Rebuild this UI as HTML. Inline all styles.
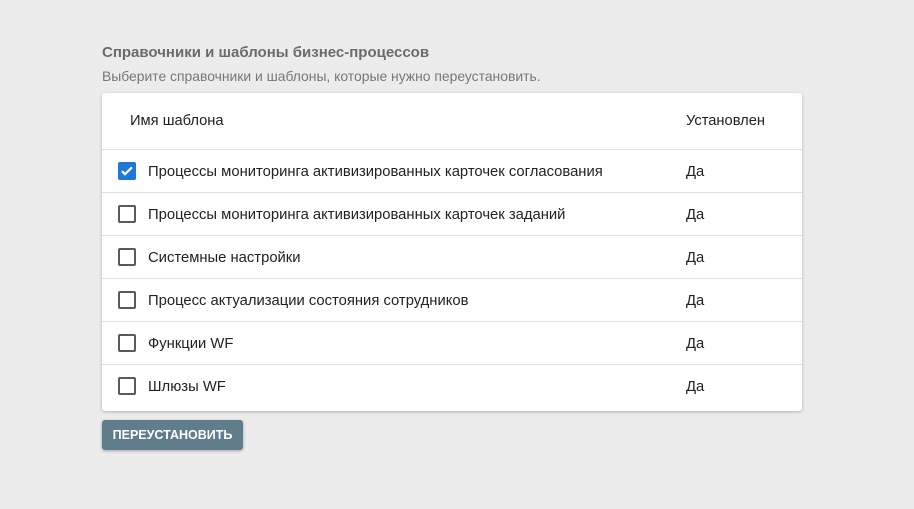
<!DOCTYPE html>
<html><head><meta charset="utf-8"><style>
body{margin:0;background:#ececec;font-family:"Liberation Sans",Arial,sans-serif;width:914px;height:509px;overflow:hidden;position:relative}
.t{position:absolute;left:102px;top:44px;font-size:15px;font-weight:bold;color:#6b6b6b}
.s{position:absolute;left:102px;top:68px;font-size:13.9px;color:#777}
.card{position:absolute;left:102px;top:93px;width:700px;height:318px;background:#fff;border-radius:3px;box-shadow:0 1px 3px rgba(0,0,0,.25)}
.h{height:56px;border-bottom:1px solid #e0e0e0;position:relative;font-size:14.7px;color:#222}
.h span{position:absolute;top:20px}
.r{height:42px;border-bottom:1px solid #e0e0e0;position:relative;font-size:14.8px;color:#222}
.r:last-child{border-bottom:none}
.r span{position:absolute;top:14px}
.cb{position:absolute;left:16px;top:12px;width:14px;height:14px;border:2px solid #5a5a5a;border-radius:2px}
.cb.on{background:#1e78d8;border-color:#1e78d8}
.btn{position:absolute;left:102px;top:420px;width:141px;height:30px;background:#5f7d8a;color:#fff;font-size:12.5px;font-weight:bold;text-align:center;line-height:30px;border-radius:3px;box-shadow:0 1px 3px rgba(0,0,0,.3)}
</style></head><body>
<div class="t">Справочники и шаблоны бизнес-процессов</div>
<div class="s">Выберите справочники и шаблоны, которые нужно переустановить.</div>
<div class="card">
<div class="h"><span style="left:28px">Имя шаблона</span><span style="left:584px">Установлен</span></div>
<div class="r"><div class="cb on"><svg width="14" height="14" viewBox="0 0 14 14"><path d="M2 7.2l3 3L12 3.3" stroke="#fff" stroke-width="2.2" fill="none"/></svg></div><span style="left:46px">Процессы мониторинга активизированных карточек согласования</span><span style="left:584px">Да</span></div>
<div class="r"><div class="cb"></div><span style="left:46px">Процессы мониторинга активизированных карточек заданий</span><span style="left:584px">Да</span></div>
<div class="r"><div class="cb"></div><span style="left:46px">Системные настройки</span><span style="left:584px">Да</span></div>
<div class="r"><div class="cb"></div><span style="left:46px">Процесс актуализации состояния сотрудников</span><span style="left:584px">Да</span></div>
<div class="r"><div class="cb"></div><span style="left:46px">Функции WF</span><span style="left:584px">Да</span></div>
<div class="r"><div class="cb"></div><span style="left:46px">Шлюзы WF</span><span style="left:584px">Да</span></div>
</div>
<div class="btn">ПЕРЕУСТАНОВИТЬ</div>
</body></html>
